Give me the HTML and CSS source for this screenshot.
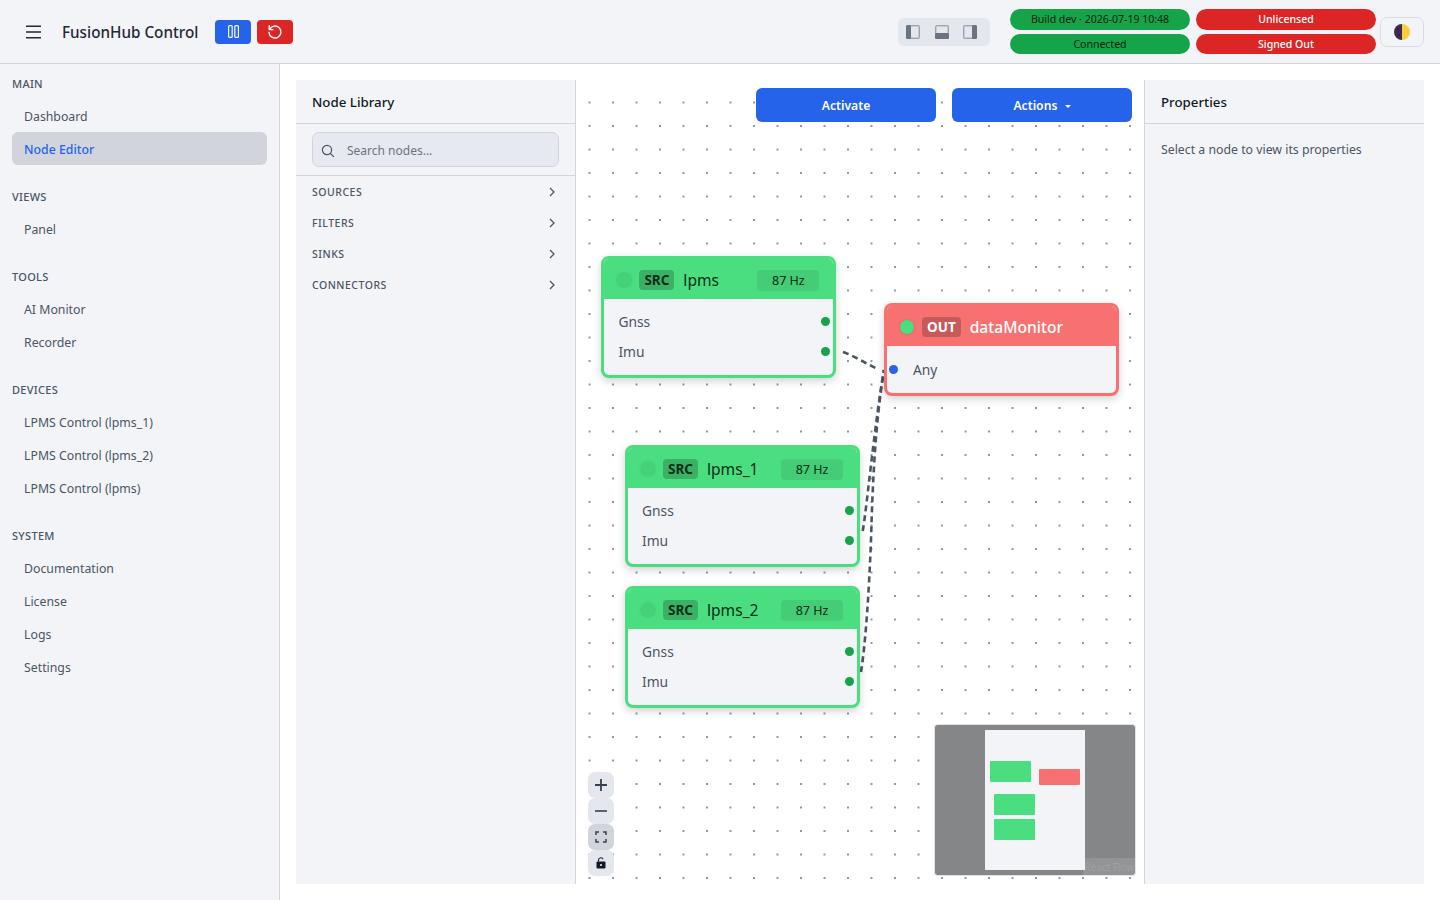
FILE: index.html
```html
<!DOCTYPE html>
<html lang="en">
<head>
  <meta charset="UTF-8">
  <meta name="viewport" content="width=device-width, initial-scale=1.0">
  <title>FusionHub Control</title>
  <link rel="stylesheet" href="styles.css">
</head>
<body>
<header class="topbar">
  <button class="menu-btn" aria-label="Menu">
    <svg width="16" height="14" viewBox="0 0 16 14" fill="none" stroke="#1f2937" stroke-width="1.6"><path d="M0 1.2h15M0 7h15M0 12.8h15"/></svg>
  </button>
  <div class="app-title">FusionHub Control</div>
  <button class="ctl-btn blue" aria-label="Pause">
    <svg width="11" height="13" viewBox="0 0 11 13" fill="none" stroke="#fff" stroke-width="1.2"><rect x="0.6" y="0.6" width="3.6" height="11.8" rx="1"/><rect x="6.8" y="0.6" width="3.6" height="11.8" rx="1"/></svg>
  </button>
  <button class="ctl-btn red" aria-label="Restart">
    <svg width="16" height="16" viewBox="0 0 16 16" fill="none" stroke="#fff" stroke-width="1.4" stroke-linecap="round" stroke-linejoin="round"><path d="M2.6 5.4A6 6 0 1 1 2 8.4"/><path d="M2.2 1.8v3.8H6"/></svg>
  </button>
  <div class="spacer"></div>
  <div class="layout-toggles">
    <svg width="16" height="16" viewBox="0 0 16 16"><rect x="1" y="1" width="14" height="14" rx="2" fill="#9ca3af"/><rect x="6" y="2.4" width="7.6" height="11.2" fill="#e5e7eb"/><rect x="1" y="1" width="5" height="14" rx="1.5" fill="#6b7280"/></svg>
    <svg width="16" height="16" viewBox="0 0 16 16"><rect x="1" y="1" width="14" height="14" rx="2" fill="#9ca3af"/><rect x="2.4" y="2.4" width="11.2" height="6.6" fill="#e5e7eb"/><rect x="1" y="9" width="14" height="6" rx="1.5" fill="#6b7280"/></svg>
    <svg width="16" height="16" viewBox="0 0 16 16"><rect x="1" y="1" width="14" height="14" rx="2" fill="#9ca3af"/><rect x="2.4" y="2.4" width="7.6" height="11.2" fill="#e5e7eb"/><rect x="10" y="1" width="5" height="14" rx="1.5" fill="#6b7280"/></svg>
  </div>
  <div class="status-col">
    <div class="pill green">Build dev · 2026-07-19 10:48</div>
    <div class="pill green">Connected</div>
  </div>
  <div class="status-col">
    <div class="pill red">Unlicensed</div>
    <div class="pill red">Signed Out</div>
  </div>
  <button class="theme-btn" aria-label="Theme">
    <svg width="16" height="16" viewBox="0 0 16 16"><path d="M8 0a8 8 0 0 1 0 16z" fill="#fbcf33"/><path d="M8 0a8 8 0 0 0 0 16z" fill="#3f2a56"/><circle cx="4" cy="5.5" r="1.1" fill="#2a1b3d"/><circle cx="5" cy="11" r="1.1" fill="#2a1b3d"/></svg>
  </button>
</header>

<div class="layout">
  <nav class="sidebar">
    <div class="nav-group">
      <div class="nav-label">MAIN</div>
      <a class="nav-item">Dashboard</a>
      <a class="nav-item active">Node Editor</a>
    </div>
    <div class="nav-group">
      <div class="nav-label">VIEWS</div>
      <a class="nav-item">Panel</a>
    </div>
    <div class="nav-group">
      <div class="nav-label">TOOLS</div>
      <a class="nav-item">AI Monitor</a>
      <a class="nav-item">Recorder</a>
    </div>
    <div class="nav-group">
      <div class="nav-label">DEVICES</div>
      <a class="nav-item">LPMS Control (lpms_1)</a>
      <a class="nav-item">LPMS Control (lpms_2)</a>
      <a class="nav-item">LPMS Control (lpms)</a>
    </div>
    <div class="nav-group">
      <div class="nav-label">SYSTEM</div>
      <a class="nav-item">Documentation</a>
      <a class="nav-item">License</a>
      <a class="nav-item">Logs</a>
      <a class="nav-item">Settings</a>
    </div>
  </nav>

  <main class="content">
    <section class="library">
      <div class="panel-title">Node Library</div>
      <div class="search-wrap">
        <div class="search-box">
          <svg width="14" height="14" viewBox="0 0 14 14" fill="none" stroke="#4b5563" stroke-width="1.2" stroke-linecap="round"><circle cx="6" cy="6" r="4.6"/><path d="M9.5 9.5L12.6 12.6"/></svg>
          <span>Search nodes...</span>
        </div>
      </div>
      <div class="lib-row">SOURCES <svg class="chev" width="8" height="10" viewBox="0 0 8 10" fill="none" stroke="#4b5563" stroke-width="1.3"><path d="M2 1l4 4-4 4"/></svg></div>
      <div class="lib-row">FILTERS <svg class="chev" width="8" height="10" viewBox="0 0 8 10" fill="none" stroke="#4b5563" stroke-width="1.3"><path d="M2 1l4 4-4 4"/></svg></div>
      <div class="lib-row">SINKS <svg class="chev" width="8" height="10" viewBox="0 0 8 10" fill="none" stroke="#4b5563" stroke-width="1.3"><path d="M2 1l4 4-4 4"/></svg></div>
      <div class="lib-row">CONNECTORS <svg class="chev" width="8" height="10" viewBox="0 0 8 10" fill="none" stroke="#4b5563" stroke-width="1.3"><path d="M2 1l4 4-4 4"/></svg></div>
    </section>

    <section class="canvas">
      <svg class="edges" width="568" height="804" viewBox="576 80 568 804" fill="none" stroke="#4b5563" stroke-width="2.6" stroke-dasharray="6 4">
        <path d="M843 352 C 855 356 866 364 878 369"/>
        <path d="M862.7 531 C 866 515 875 420 884 370"/>
        <path d="M861 672 C 866 640 869 590 871 540 C 873 470 876 420 884 370"/>
      </svg>

      <div class="canvas-actions">
        <button class="act-btn">Activate</button>
        <button class="act-btn">Actions <span class="caret"></span></button>
      </div>

      <div class="node src n-lpms">
        <div class="node-head">
          <span class="led"></span><span class="tag">SRC</span><span class="node-name">lpms</span><span class="rate">87 Hz</span>
        </div>
        <div class="node-body">
          <div class="port">Gnss<i class="dot"></i></div>
          <div class="port">Imu<i class="dot"></i></div>
        </div>
      </div>

      <div class="node src n-lpms1">
        <div class="node-head">
          <span class="led"></span><span class="tag">SRC</span><span class="node-name">lpms_1</span><span class="rate">87 Hz</span>
        </div>
        <div class="node-body">
          <div class="port">Gnss<i class="dot"></i></div>
          <div class="port">Imu<i class="dot"></i></div>
        </div>
      </div>

      <div class="node src n-lpms2">
        <div class="node-head">
          <span class="led"></span><span class="tag">SRC</span><span class="node-name">lpms_2</span><span class="rate">87 Hz</span>
        </div>
        <div class="node-body">
          <div class="port">Gnss<i class="dot"></i></div>
          <div class="port">Imu<i class="dot"></i></div>
        </div>
      </div>

      <div class="node out n-monitor">
        <div class="node-head">
          <span class="led on"></span><span class="tag">OUT</span><span class="node-name">dataMonitor</span>
        </div>
        <div class="node-body">
          <div class="port in"><i class="dot blue"></i>Any</div>
        </div>
      </div>

      <div class="flow-controls">
        <button class="flow-btn"><svg width="14" height="14" viewBox="0 0 14 14" stroke="#374151" stroke-width="1.8"><path d="M7 1v12M1 7h12"/></svg></button>
        <button class="flow-btn"><svg width="14" height="14" viewBox="0 0 14 14" stroke="#374151" stroke-width="1.6"><path d="M1 7h12"/></svg></button>
        <button class="flow-btn fit"><svg width="12" height="12" viewBox="0 0 12 12" fill="none" stroke="#374151" stroke-width="1.5"><path d="M1 4V1h3M8 1h3v3M11 8v3H8M4 11H1V8"/></svg></button>
        <button class="flow-btn"><svg width="10" height="12" viewBox="0 0 10 12"><rect x="0.5" y="4.5" width="9" height="7" rx="1" fill="#111827"/><path d="M2.5 4.5V3a2.4 2.4 0 0 1 4.6-.8" fill="none" stroke="#111827" stroke-width="1.1"/><circle cx="5" cy="8" r="1.1" fill="#e5e7eb"/></svg></button>
      </div>

      <svg class="minimap" width="200" height="150" viewBox="0 0 200 150">
        <rect width="200" height="150" rx="2" fill="#858687"/>
        <rect x="50" y="5" width="100" height="140" fill="#f3f4f8"/>
        <rect x="55" y="36" width="41" height="21" rx="1" fill="#4ade80"/>
        <rect x="104" y="44" width="41" height="16" rx="1" fill="#f87171"/>
        <rect x="59" y="69" width="41" height="21" rx="1" fill="#4ade80"/>
        <rect x="59" y="94" width="41" height="21" rx="1" fill="#4ade80"/>
      </svg>
      <div class="attribution">React Flow</div>
    </section>

    <section class="properties">
      <div class="panel-title">Properties</div>
      <p class="props-hint">Select a node to view its properties</p>
    </section>
  </main>
</div>
</body>
</html>
```

FILE: styles.css
```css
* {
  box-sizing: border-box;
}
body {
  font-family: "Noto Sans", sans-serif;
  margin: 0;
  height: 900px;
  overflow: hidden;
  background-color: #fff;
  color: #111827;
  font-size: 13px;
}
button {
  font-family: inherit;
  border: none;
  padding: 0;
  cursor: pointer;
}

/* top bar */
.topbar {
  height: 64px;
  display: flex;
  align-items: center;
  padding: 0 16px 0 26px;
  background: #f3f4f8;
  border-bottom: 1px solid #d1d5db;
}
.menu-btn {
  background: none;
  display: flex;
  width: 36px;
}
.app-title {
  font-size: 15.25px;
  font-weight: 500;
  color: #1f2937;
  margin-right: 17px;
}
.ctl-btn {
  width: 36px;
  height: 24px;
  border-radius: 4px;
  margin-right: 6px;
  display: flex;
  align-items: center;
  justify-content: center;
}
.ctl-btn.blue { background: #2563eb; }
.ctl-btn.red { background: #dc2626; }
.spacer { flex: 1; }
.layout-toggles {
  width: 92px;
  height: 28px;
  background: #e5e7ee;
  border-radius: 6px;
  display: flex;
  align-items: center;
  gap: 12.5px;
  padding: 0 7px;
  margin-right: 20px;
}
.status-col {
  width: 180px;
  margin-right: 6px;
  display: flex;
  flex-direction: column;
  gap: 4px;
}
.status-col:last-of-type {
  margin-right: 4px;
}
.pill {
  height: 20.5px;
  border-radius: 11px;
  display: flex;
  align-items: center;
  justify-content: center;
  font-size: 10.5px;
}
.pill.green { background: #16a34a; color: #041f0f; }
.pill.red { background: #dc2626; color: #fff; font-weight: 500; }
.theme-btn {
  width: 44px;
  height: 30px;
  background: #f3f4f8;
  border: 1px solid #d9dce3;
  border-radius: 7px;
  display: flex;
  align-items: center;
  justify-content: center;
}

/* page layout */
.layout {
  display: flex;
  height: 836px;
}
.sidebar {
  width: 280px;
  background: #f3f4f8;
  border-right: 1px solid #d1d5db;
  padding: 12px 12px 0;
}
.nav-group {
  margin-bottom: 24px;
}
.nav-label {
  height: 16px;
  line-height: 16px;
  font-size: 11px;
  font-weight: 500;
  letter-spacing: 0.3px;
  color: #4b5563;
  margin-bottom: 7px;
}
.nav-item {
  display: block;
  height: 33px;
  line-height: 35px;
  padding-left: 12px;
  border-radius: 6px;
  font-size: 12.3px;
  color: #4b5563;
}
.nav-item.active {
  width: 255px;
  background: #d1d5db;
  color: #2563eb;
  font-weight: 500;
}
.content {
  flex: 1;
  display: flex;
  padding: 16px;
  height: 836px;
}

/* side panels */
.library, .properties {
  width: 280px;
  background: #f3f4f8;
}
.library { border-right: 1px solid #d1d5db; }
.properties { border-left: 1px solid #d1d5db; }
.panel-title {
  height: 44px;
  line-height: 44px;
  padding-left: 16px;
  font-size: 13.3px;
  font-weight: 500;
  border-bottom: 1px solid #d1d5db;
}
.search-wrap {
  padding: 8px 16px;
  height: 52px;
  border-bottom: 1px solid #d1d5db;
}
.search-box {
  height: 35px;
  background: #e7e9f0;
  border: 1px solid #d1d5db;
  border-radius: 7px;
  display: flex;
  align-items: center;
  gap: 12px;
  padding: 2px 0 0 8px;
  font-size: 12px;
  color: #6b7280;
}
.lib-row {
  height: 31px;
  display: flex;
  align-items: center;
  justify-content: space-between;
  padding: 0 19px 0 16px;
  font-size: 10.5px;
  font-weight: 500;
  letter-spacing: 0.5px;
  color: #4b5563;
}
.props-hint {
  margin: 17px 16px;
  font-size: 12.3px;
  color: #4b5563;
}

/* flow canvas */
.canvas {
  position: relative;
  width: 568px;
  overflow: hidden;
  background-color: #fff;
  background-image: radial-gradient(circle, #91959d 0.7px, transparent 1px);
  background-size: 23.5px 23.5px;
  background-position: 1.75px 10.75px;
}
.edges {
  position: absolute;
  left: 0;
  top: 0;
}
.canvas-actions {
  position: absolute;
  left: 180px;
  top: 8px;
  display: flex;
  gap: 16px;
}
.act-btn {
  width: 180px;
  height: 34px;
  border-radius: 6px;
  background: #2563eb;
  color: #fff;
  font-size: 12.2px;
  font-weight: 600;
}
.caret {
  display: inline-block;
  margin-left: 4px;
  vertical-align: middle;
  border-left: 3px solid transparent;
  border-right: 3px solid transparent;
  border-top: 3px solid #fff;
}
.node {
  position: absolute;
  width: 235px;
  border: 3px solid;
  border-radius: 8px;
  background: #f3f4f8;
  box-shadow: 0 3px 8px rgba(0, 0, 0, 0.18);
  overflow: hidden;
}
.node.src { border-color: #4ade80; }
.node.out { border-color: #f87171; }
.n-lpms { left: 25.4px; top: 176px; }
.n-lpms1 { left: 49px; top: 365px; }
.n-lpms2 { left: 49px; top: 506px; }
.n-monitor { left: 308px; top: 223px; }
.node-head {
  height: 40px;
  display: flex;
  align-items: center;
  padding: 2px 14px 0 13px;
}
.src .node-head { background: #4ade80; color: #052e16; }
.out .node-head { background: #f87171; color: #fff; }
.led {
  width: 14px;
  height: 14px;
  border-radius: 50%;
  background: #45d277;
  box-shadow: 0 0 3px rgba(0, 0, 0, 0.15);
  margin-right: 8px;
}
.led.on { background: #4ade80; }
.tag {
  height: 20px;
  line-height: 20px;
  padding: 0 5px;
  border-radius: 4px;
  background: rgba(0, 0, 0, 0.2);
  font-size: 13.5px;
  font-weight: 700;
  margin-right: 9px;
}
.node-name {
  font-size: 15.6px;
  font-weight: 500;
  flex: 1;
}
.src .node-name { font-weight: 400; }
.rate {
  width: 62px;
  height: 21px;
  line-height: 22px;
  text-align: center;
  border-radius: 4px;
  background: rgba(0, 0, 0, 0.08);
  font-size: 12.5px;
}
.node-body {
  padding: 8px 0 9px;
}
.port {
  height: 29.5px;
  display: flex;
  align-items: center;
  justify-content: space-between;
  padding: 0 3px 0 14px;
  font-size: 13.8px;
  color: #4b5563;
}
.port.in {
  justify-content: flex-start;
  gap: 15px;
  padding-left: 2px;
  height: 30px;
}
.dot {
  width: 9px;
  height: 9px;
  border-radius: 50%;
  background: #16a34a;
}
.dot.blue { background: #2563eb; }
.flow-controls {
  position: absolute;
  left: 12px;
  top: 692px;
  display: flex;
  flex-direction: column;
  gap: 0;
}
.flow-btn {
  width: 26px;
  height: 26px;
  border-radius: 7px;
  background: #e5e7ee;
  display: flex;
  align-items: center;
  justify-content: center;
}
.flow-btn.fit { background: #d1d5db; }
.minimap {
  position: absolute;
  left: 359px;
  top: 645px;
  border-radius: 2px;
  box-shadow: 0 0 0 1px #dfe2e8;
}
.attribution {
  position: absolute;
  left: 507px;
  top: 778px;
  width: 53px;
  height: 18px;
  line-height: 18px;
  font-size: 10px;
  text-align: center;
  white-space: nowrap;
  color: #a0a1a3;
  background: rgba(255, 255, 255, 0.12);
}
```
